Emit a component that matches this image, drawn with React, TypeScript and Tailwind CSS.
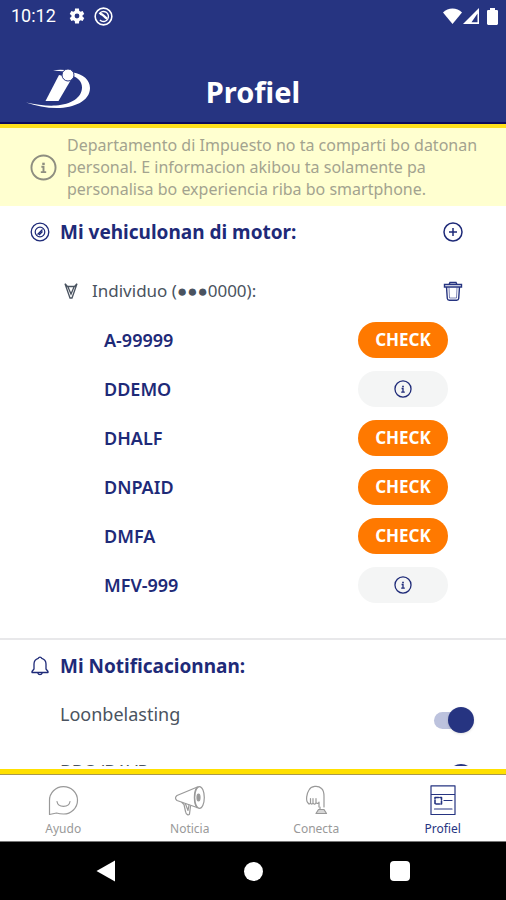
import type { ReactNode } from "react";

type Vehicle = { plate: string; check: boolean };

const vehicles: Vehicle[] = [
  { plate: "A-99999", check: true },
  { plate: "DDEMO", check: false },
  { plate: "DHALF", check: true },
  { plate: "DNPAID", check: true },
  { plate: "DMFA", check: true },
  { plate: "MFV-999", check: false },
];

function InfoIcon({ className }: { className: string }) {
  return (
    <svg viewBox="0 0 28 28" className={className} fill="none" stroke="currentColor" strokeWidth="2" aria-hidden="true">
      <circle cx="14" cy="14" r="12.5" />
      <path d="M14 9v2.4" strokeWidth="2.6" />
      <path d="M11.8 13.2H14v5.3M11.2 18.8h5.6" />
    </svg>
  );
}

function StatusBar() {
  return (
    <div className="flex h-8 items-center pl-[11px] pr-2 font-['Roboto',sans-serif] text-lg text-white">
      <span>10:12</span>
      <svg viewBox="0 0 24 24" className="ml-3 size-[18px]" fill="currentColor" aria-hidden="true">
        <path d="M19.4 13a7.5 7.5 0 0 0 0-2l2.3-1.7-2.2-4-2.7 1a8 8 0 0 0-1.8-1L14.6 2H9.4L9 5.3a8 8 0 0 0-1.8 1l-2.7-1-2.2 4L4.6 11a7.5 7.5 0 0 0 0 2l-2.3 1.7 2.2 4 2.7-1a8 8 0 0 0 1.8 1l.4 3.3h5.2l.4-3.3a8 8 0 0 0 1.8-1l2.7 1 2.2-4zM12 15.2a3.2 3.2 0 1 1 0-6.4 3.2 3.2 0 0 1 0 6.4z" />
      </svg>
      <svg viewBox="0 0 18 18" className="ml-2 size-[19px]" fill="none" stroke="currentColor" aria-hidden="true">
        <circle cx="9" cy="9" r="7.9" strokeWidth="1.5" />
        <circle cx="9" cy="9" r="4.7" strokeWidth="1.3" strokeDasharray="23 6.5" transform="rotate(-150 9 9)" />
        <path d="M5.5 6.5c3-.5 3.5 3 7 4.5" strokeWidth="2.2" />
      </svg>
      <div className="ml-auto flex items-center">
        <svg viewBox="0 0 19 16" className="h-4 w-[19px]" fill="currentColor" aria-hidden="true">
          <path d="M9.5 16 0 4.5C5-1 14-1 19 4.5z" />
        </svg>
        <svg viewBox="0 0 16 16" className="ml-px size-4" fill="currentColor" fillRule="evenodd" aria-hidden="true">
          <path d="M0 16 16 0v16zM8.5 14.300h6V5.500z" />
        </svg>
        <svg viewBox="0 0 11 17" className="ml-2 h-[17px] w-[11px]" fill="currentColor" aria-hidden="true">
          <path d="M3 0h5v2h2.200l.8.800V16l-1 1H1l-1-1V2.800L.8 2H3z" />
        </svg>
      </div>
    </div>
  );
}

function Header() {
  return (
    <header className="border-b-4 border-[#ffe01b] bg-[#263481]">
      <StatusBar />
      <div className="grid h-[92px] grid-cols-3 items-center border-b-2 border-[#0d0b5c] px-[26px] pt-[30px]">
        <svg viewBox="0 0 66 42" className="mb-1.5 h-[42px] w-[66px] text-white" fill="currentColor" role="img" aria-label="Logo">
          <path d="M33 7 46 10 32.500 33H19.500z" />
          <path d="M27 2.600q6-1.500 12-.6v1.500Q33 3 27 2.600z" />
          <path d="M47 4.500C57 6 64 12 64 20c0 13-16 20-33 20-11 0-21-2-31-5.500 11 2.500 21 3.500 30 3 15-1 26-8 26-18 0-6-4-9.500-9-11.500z" />
          <circle cx="42" cy="7" r="6" stroke="#263481" strokeWidth="1" />
        </svg>
        <h1 className="text-center text-[29px] leading-9 font-bold text-white">Profiel</h1>
      </div>
    </header>
  );
}

function Switch({ label }: { label: string }) {
  return (
    <label className="flex h-[57px] items-start justify-between pl-[60px] pr-8 text-[18px] leading-6 text-[#4a5360]">
      <span>{label}</span>
      <span className="relative mt-[5px] flex h-[26px] w-10 items-center">
        <input type="checkbox" defaultChecked className="peer sr-only" />
        <span className="h-[17px] w-9 rounded-full bg-[#bcc2dd]" />
        <span className="absolute right-0 size-[26px] rounded-full bg-[#263481] shadow" />
      </span>
    </label>
  );
}

function Tab({ label, active = false, children }: { label: string; active?: boolean; children: ReactNode }) {
  return (
    <a
      href="#"
      aria-current={active ? "page" : undefined}
      className={`flex flex-col items-center text-[12px] leading-4 ${active ? "text-[#263481]" : "text-[#999999]"}`}
    >
      <svg viewBox="0 0 32 32" className="mb-1 size-8" fill="none" stroke="currentColor" strokeWidth="1.2" strokeLinejoin="round" strokeLinecap="round" aria-hidden="true">
        {children}
      </svg>
      {label}
    </a>
  );
}

export default function App() {
  return (
    <div className="flex h-screen flex-col overflow-hidden bg-white font-['Noto_Sans','Open_Sans',sans-serif]">
      <Header />
      <main className="mb-[3px] min-h-0 flex-1 overflow-hidden">
        <div className="flex h-[78px] items-center bg-[#ffffd0] pl-[30px] pr-4 text-[#a3a38f]">
          <InfoIcon className="mr-2.5 size-[27px] shrink-0 text-[#8e8e80]" />
          <p className="text-[16px] leading-[22px]">
            Departamento di Impuesto no ta comparti bo datonan personal. E informacion akibou ta solamente pa personalisa bo experiencia riba bo smartphone.
          </p>
        </div>

        <section className="border-b-2 border-[#e8e8ea] pb-[35px] text-[#1e2a78]">
          <div className="flex h-[51px] items-center pl-[30px] pr-[43px]">
            <svg viewBox="0 0 20 20" className="mr-2.5 size-5" fill="none" stroke="currentColor" aria-hidden="true">
              <circle cx="10" cy="10" r="8.800" strokeWidth="1.300" />
              <circle cx="10" cy="10" r="4.800" strokeWidth="1.200" />
              <path d="m7.500 12.500 5-5M9 13l3.500-3.500" strokeWidth="1.300" />
            </svg>
            <h2 className="text-[19px] leading-7 font-bold">Mi vehiculonan di motor:</h2>
            <button type="button" aria-label="Agrega" className="ml-auto">
              <svg viewBox="0 0 20 20" className="size-5" fill="none" stroke="currentColor" strokeWidth="1.500">
                <circle cx="10" cy="10" r="9" />
                <path d="M10 6v8M6 10h8" />
              </svg>
            </button>
          </div>
          <div className="mt-[22px] flex h-6 items-center pl-16 pr-[43px] text-[#4a5360]">
            <svg viewBox="0 0 14 16" className="mr-3.5 h-4 w-3.5" fill="none" stroke="currentColor" strokeWidth="1.300" aria-hidden="true">
              <path d="M1 .8 6 15h2L13 .8 10.500 3.500h-7zM4 4l3 7 3-7" />
            </svg>
            <span className="text-[17px] leading-6">Individuo (●●●0000):</span>
            <button type="button" aria-label="Elimina" className="ml-auto text-[#263481]">
              <svg viewBox="0 0 20 20" className="size-5" fill="none" stroke="currentColor" strokeWidth="1.400">
                <path d="M1.500 3.500h17V6h-17zM6 3.500 7 1.500h6l1 2M3.500 6l.8 11.500q.2 1.700 2 1.700h7.400q1.800 0 2-1.700L16.500 6" />
                <path d="M6 6.500l.5 10.500h7L14 6.500" strokeWidth=".6" />
              </svg>
            </button>
          </div>
          <ul className="mt-[19px] flex flex-col gap-[13px] pl-[104px] pr-[58px]">
            {vehicles.map((v) => (
              <li key={v.plate} className="flex h-9 items-center justify-between">
                <span className="text-[18px] leading-6 font-semibold">{v.plate}</span>
                {v.check ? (
                  <button type="button" className="h-9 w-[90px] rounded-full bg-[#ff7900] text-[17px] leading-6 font-bold text-white">
                    CHECK
                  </button>
                ) : (
                  <button type="button" aria-label={`Info ${v.plate}`} className="flex h-9 w-[90px] items-center justify-center rounded-full bg-[#f4f5f5]">
                    <InfoIcon className="size-[18px]" />
                  </button>
                )}
              </li>
            ))}
          </ul>
        </section>

        <section>
          <div className="flex h-[52px] items-center pl-[30px] text-[#1e2a78]">
            <svg viewBox="0 0 20 20" className="mr-2.5 size-5" fill="none" stroke="currentColor" strokeWidth="1.300" strokeLinejoin="round" aria-hidden="true">
              <path d="M2 16.500v-1l2-2.500V8a6 6 0 0 1 4.300-5.700 1.800 1.800 0 0 1 3.400 0A6 6 0 0 1 16 8v5l2 2.500v1zM7.800 17a2.300 2.300 0 0 0 4.400 0" />
            </svg>
            <h2 className="text-[19px] leading-7 font-bold">Mi Notificacionnan:</h2>
          </div>
          <div className="pt-2.5">
            <Switch label="Loonbelasting" />
            <Switch label="BBO/BAVP" />
          </div>
        </section>
      </main>

      <nav className="h-[73px] border-t-[5px] border-b border-t-[#ffe000] border-b-[#777777] bg-white">
        <div className="grid grid-cols-4 border-t border-[#a89850] pt-2.5">
          <Tab label="Ayudo">
            <path d="M2.500 29.500V15.500A14 13.700 0 1 1 16.500 29c-3 0-5-.4-7-1z" />
            <path d="M10 16.500c1 6.500 12 6.500 13 0" />
          </Tab>
          <Tab label="Noticia">
            <ellipse cx="25.500" cy="12.500" rx="4.800" ry="10.800" />
            <path d="M23 2.500c-3.500 4-3.500 16 0 20" />
            <ellipse cx="24.500" cy="12.500" rx="1.500" ry="3.500" fill="currentColor" />
            <path d="M24 1.800 3 10.500q-3 2.500 0 5l20 7" />
            <path d="M8 17.500l2 2 1.500 7c.5 3.500 3.500 4 4 2.500l1-8M11.500 19l2.500 6.500 1-5.500" />
          </Tab>
          <Tab label="Conecta">
            <path d="M8.500 18.500C5 16 7 8 9 5c2-4 9-5 12.500-1.500 2.500 2 2.500 5 2.500 8V22" />
            <path d="M8.500 18.500c1 1 2 0 2-1v-4 4.500c1 2 2.500 1 2.500-.5v-4 4.500c1 2 3 1 3-.5v-4 4c1 1.500 3 1 3-.5v5" />
            <path d="M18.500 24.500h5.500l2.500 4H16zM20 22v2.500" fill="currentColor" fillOpacity=".4" />
          </Tab>
          <Tab label="Profiel" active>
            <path d="M4 .8h24v28.700H4zM4 9.500h24" />
            <path d="M8 12.500h6.500v6.500H8z" strokeWidth="1.600" strokeDasharray="3.500 1.500" />
            <path d="M17 15.500h8M7.500 24h17.500" />
          </Tab>
        </div>
      </nav>

      <div className="flex h-[58px] items-center justify-between bg-black px-24 text-white">
        <button type="button" aria-label="Back">
          <svg viewBox="0 0 20 22" className="h-[22px] w-5" fill="currentColor">
            <path d="M.5 11 19 .5v21z" />
          </svg>
        </button>
        <button type="button" aria-label="Home" className="size-[19px] rounded-full bg-white" />
        <button type="button" aria-label="Recents" className="size-5 rounded-sm bg-white" />
      </div>
    </div>
  );
}
